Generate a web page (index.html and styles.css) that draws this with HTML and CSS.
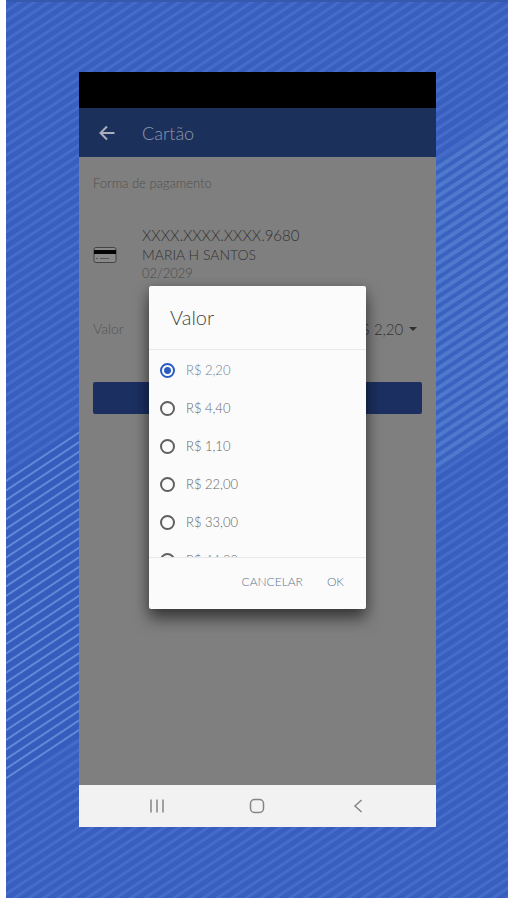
FILE: index.html
```
<!DOCTYPE html>
<html lang="pt-BR">
<head>
    <meta charset="UTF-8">
    <meta name="viewport" content="width=device-width, initial-scale=1.0">
    <title>Cartão</title>
    <link rel="stylesheet" href="styles.css">
</head>
<body>

    <div class="stage">
        <!-- Striped backdrop -->
        <svg class="backdrop" viewBox="0 0 502 898" preserveAspectRatio="none" aria-hidden="true">
            <defs>
                <pattern id="soft" width="20" height="8" patternUnits="userSpaceOnUse" patternTransform="rotate(-33.5)">
                    <rect width="20" height="3" fill="#456cc8"/>
                </pattern>
                <pattern id="bright" width="20" height="8" patternUnits="userSpaceOnUse" patternTransform="rotate(-33.5)">
                    <rect width="20" height="8" fill="#365dbd"/>
                    <rect width="20" height="2" fill="#6189d8"/>
                </pattern>
                <pattern id="wide" width="20" height="8" patternUnits="userSpaceOnUse" patternTransform="rotate(-33.5)">
                    <rect width="20" height="8" fill="#3a62c0"/>
                    <rect width="20" height="4" fill="#5078cd"/>
                </pattern>
            </defs>
            <rect width="502" height="898" fill="#385fbf"/>
            <rect width="502" height="898" fill="url(#soft)"/>
            <path d="M0 475 L73 427 V737 L0 785 Z" fill="url(#bright)"/>
            <path d="M430 161 L502 113 V424 L430 472 Z" fill="url(#wide)"/>
            <rect width="502" height="2" fill="#3559ae"/>
        </svg>

        <main class="phone">
            <div class="status-bar"></div>

            <header>
                <button class="back" aria-label="Voltar">
                    <svg width="16" height="16" viewBox="0 0 16 16"><path d="M15.500 8H1.500M8 1.500L1.500 8L8 14.500" fill="none" stroke="#a9afbb" stroke-width="2"/></svg>
                </button>
                <h1>Cartão</h1>
            </header>

            <!-- Payment form -->
            <section class="content">
                <p class="caption">Forma de pagamento</p>

                <div class="card-row">
                    <svg width="24" height="18" viewBox="0 0 24 18" aria-hidden="true">
                        <rect x="1" y="1.500" width="22" height="15" rx="2" fill="#898989" stroke="#444"/>
                        <path d="M1 4h22v4H1z" fill="#050505"/>
                        <path d="M3 12.500h2M7 12.500h9" stroke="#555"/>
                    </svg>
                    <div class="card-info">
                        <div class="number">XXXX.XXXX.XXXX.9680</div>
                        <div>MARIA H SANTOS</div>
                        <div class="expiry">02/2029</div>
                    </div>
                </div>

                <div class="value-row">
                    <label for="amount">Valor</label>
                    <div class="select">
                        <select id="amount">
                            <option>R$ 2,20</option>
                        </select>
                        <svg width="8" height="4" viewBox="0 0 8 4" aria-hidden="true"><path d="M0 0h8L4 4z" fill="#303030"/></svg>
                    </div>
                </div>

                <button class="submit" aria-label="Continuar"></button>
            </section>

            <nav>
                <button aria-label="Recentes">
                    <svg width="16" height="16" viewBox="0 0 16 16"><path d="M2 1.500v13M8 1.500v13M14 1.500v13" stroke="#858585" stroke-width="1.500"/></svg>
                </button>
                <button aria-label="Início">
                    <svg width="16" height="16" viewBox="0 0 16 16"><rect x="1.500" y="1.500" width="13" height="13" rx="4" fill="none" stroke="#858585" stroke-width="1.500"/></svg>
                </button>
                <button aria-label="Voltar">
                    <svg width="16" height="16" viewBox="0 0 16 16"><path d="M11.500 2L5 8L11.500 14" fill="none" stroke="#858585" stroke-width="1.500"/></svg>
                </button>
            </nav>

            <!-- Value picker -->
            <form class="dialog" role="dialog" aria-labelledby="dialogTitle">
                <h2 id="dialogTitle">Valor</h2>
                <div class="options">
                    <label><input type="radio" name="valor" checked>R$ 2,20</label>
                    <label><input type="radio" name="valor">R$ 4,40</label>
                    <label><input type="radio" name="valor">R$ 1,10</label>
                    <label><input type="radio" name="valor">R$ 22,00</label>
                    <label><input type="radio" name="valor">R$ 33,00</label>
                    <label><input type="radio" name="valor">R$ 44,00</label>
                </div>
                <div class="actions">
                    <button type="button">CANCELAR</button>
                    <button type="button">OK</button>
                </div>
            </form>
        </main>
    </div>

</body>
</html>
```
FILE: styles.css
```
* {
    box-sizing: border-box;
}

body {
    margin: 0;
    padding: 0 2px 2px 6px;
    background: white;
    font-family: Lato, "Liberation Sans", sans-serif;
    font-weight: 300;
    font-size: 13px;
}

h1, h2, p {
    margin: 0;
    font-weight: 300;
}

button, select {
    padding: 0;
    border: none;
    background: none;
    font: inherit;
    cursor: pointer;
}

svg {
    display: block;
}

/* Backdrop */
.stage {
    position: relative;
    display: flex;
    min-height: calc(100vh - 2px);
    padding: 72px 72px 71px 73px;
}

.backdrop {
    position: absolute;
    top: 0;
    left: 0;
    width: 100%;
    height: 100%;
}

/* Phone */
.phone {
    position: relative;
    flex: 1;
    display: flex;
    flex-direction: column;
    background: #7f7f7f;
}

.status-bar {
    height: 36px;
    background: black;
}

header {
    display: flex;
    align-items: center;
    gap: 27px;
    height: 49px;
    padding: 0 20px;
    background: #1c305c;
    color: #8f98aa;
}

header h1 {
    font-size: 18px;
    line-height: 24px;
}

/* Payment form */
.content {
    flex: 1;
    padding: 16px 14px;
    color: #333;
}

.caption {
    line-height: 20px;
    color: #505050;
}

.card-row {
    display: flex;
    align-items: center;
    gap: 25px;
    margin-top: 33px;
}

.card-info {
    font-size: 14px;
    line-height: 19px;
}

.number {
    font-size: 15px;
}

.expiry {
    font-size: 13px;
    color: #4a4a4a;
}

.value-row {
    display: flex;
    align-items: center;
    justify-content: space-between;
    margin-top: 36px;
    padding-right: 5px;
    font-size: 15px;
    line-height: 20px;
}

.value-row label {
    font-size: 14px;
    color: #555;
}

.select {
    display: flex;
    align-items: center;
    gap: 5px;
}

.select select {
    appearance: none;
    color: #333;
}

.submit {
    display: block;
    width: 100%;
    height: 32px;
    margin-top: 43px;
    border-radius: 2px;
    background: #1b3061;
}

/* System buttons */
nav {
    display: flex;
    height: 42px;
    padding: 0 28px;
    background: #f2f2f2;
}

nav button {
    flex: 1;
    display: flex;
    align-items: center;
    justify-content: center;
}

/* Value picker */
.dialog {
    position: absolute;
    top: 214px;
    left: 70px;
    right: 70px;
    border-radius: 2px;
    background: #fbfbfb;
    box-shadow: 0 10px 16px rgba(0, 0, 0, 0.5), 0 2px 12px rgba(0, 0, 0, 0.2);
}

.dialog h2 {
    padding: 16px 21px;
    border-bottom: 1px solid #e9e9e9;
    font-size: 20px;
    line-height: 31px;
    color: #444;
}

.options {
    height: 207px;
    padding-top: 1px;
    overflow-y: auto;
    scrollbar-width: none;
}

.options label {
    display: flex;
    align-items: center;
    gap: 11px;
    height: 38px;
    padding-left: 11px;
    color: #666;
}

.options label:has(input:checked) {
    color: #6c8199;
}

.options input {
    appearance: none;
    width: 15px;
    height: 15px;
    margin: 0;
    border: 2px solid #606060;
    border-radius: 50%;
}

.options input:checked {
    border-color: #2a5bc0;
    background: radial-gradient(#2a5bc0 3px, transparent 4px);
}

.actions {
    display: flex;
    align-items: center;
    justify-content: flex-end;
    gap: 24px;
    height: 52px;
    padding: 0 22px 4px;
    border-top: 1px solid #e9e9e9;
    font-size: 12px;
}

.actions button {
    color: #60758f;
}
```
